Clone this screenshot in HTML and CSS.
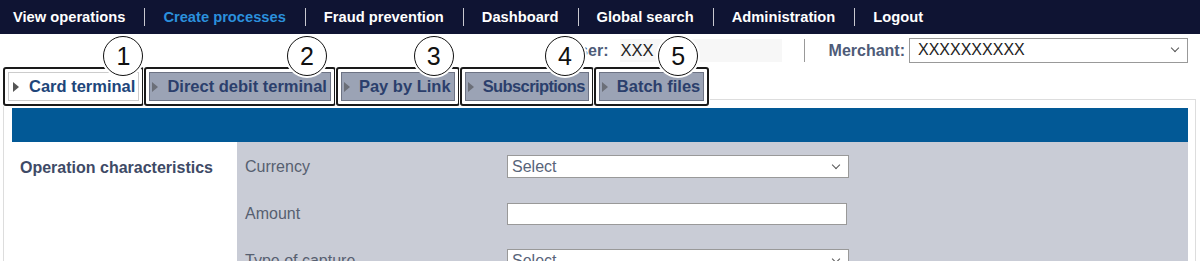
FILE: index.html
```html
<!DOCTYPE html>
<html lang="en">
<head>
  <meta charset="UTF-8" />
  <title>Create processes</title>
  <link rel="stylesheet" href="styles.css">
</head>
<body>
  <!-- Main menu -->
  <nav class="menu">
    <a href="#">View operations</a>
    <a href="#" class="active">Create processes</a>
    <a href="#">Fraud prevention</a>
    <a href="#">Dashboard</a>
    <a href="#">Global search</a>
    <a href="#">Administration</a>
    <a href="#">Logout</a>
  </nav>

  <!-- User / merchant bar -->
  <div class="userbar">
    <div class="user">
      <span class="label">User:</span>
      <span class="user-name">XXX</span>
    </div>
    <div class="merchant">
      <span class="label">Merchant:</span>
      <div class="select merchant-select">XXXXXXXXXX</div>
    </div>
  </div>

  <!-- Tabs, each one marked with a numbered callout -->
  <div class="tabs">
    <div class="mark">
      <span class="tab current">Card terminal</span>
      <span class="callout">1</span>
    </div>
    <div class="mark">
      <span class="tab">Direct debit terminal</span>
      <span class="callout c2">2</span>
    </div>
    <div class="mark">
      <span class="tab">Pay by Link</span>
      <span class="callout c3">3</span>
    </div>
    <div class="mark">
      <span class="tab tight">Subscriptions</span>
      <span class="callout c4">4</span>
    </div>
    <div class="mark">
      <span class="tab">Batch files</span>
      <span class="callout c5">5</span>
    </div>
  </div>

  <div class="panel">
    <div class="panel-head"></div>
    <div class="section">
      <div class="section-title">Operation characteristics</div>
      <div class="fields">
        <div class="row">
          <label>Currency</label>
          <div class="select">Select</div>
        </div>
        <div class="row">
          <label>Amount</label>
          <div class="input"></div>
        </div>
        <div class="row">
          <label>Type of capture</label>
          <div class="select">Select</div>
        </div>
      </div>
    </div>
  </div>
</body>
</html>
```

FILE: styles.css
```css
/* Base styling */
body {
  font-family: "Liberation Sans", Arial, sans-serif;
  background: #fff;
  color: #333;
  margin: 0;
  padding: 0;
  overflow: hidden;
}
/* Main menu */
.menu {
  display: flex;
  align-items: center;
  height: 34px;
  background-color: #0f1433;
}
.menu a {
  color: #fff;
  font-weight: bold;
  font-size: 14.7px;
  text-decoration: none;
  padding: 0 19px 0 13px;
  border-right: 1px solid #c8c8d0;
  line-height: 18px;
}
.menu a + a {
  padding-left: 18px;
}
.menu a:last-child {
  border-right: none;
}
.menu a.active {
  color: #2b90dd;
}
/* User / merchant bar */
.userbar {
  display: flex;
  justify-content: flex-end;
  align-items: center;
  height: 33px;
  padding-right: 12px;
}
.label {
  font-weight: bold;
  font-size: 16px;
  color: #4e5b78;
}
.user {
  display: flex;
  align-items: center;
  width: 214px;
  padding-right: 22px;
  border-right: 1px solid #999;
  height: 23px;
}
.user-name {
  font-size: 16.5px;
  color: #222;
  margin-left: 12px;
  background: #f7f7f7;
  flex: 1;
  padding: 2px 0;
}
.merchant {
  display: flex;
  align-items: center;
  margin-left: 24px;
}
.merchant .label {
  margin-right: 4px;
}
.select {
  position: relative;
  box-sizing: border-box;
  border: 1px solid #999;
  background: #fff;
  font-size: 16px;
  color: #222;
  padding: 2px 4px;
  height: 23px;
  line-height: 17px;
}
.select::after {
  content: "";
  position: absolute;
  right: 9px;
  top: 6px;
  width: 5px;
  height: 5px;
  border-right: 1px solid #555;
  border-bottom: 1px solid #555;
  transform: rotate(45deg);
}
.merchant-select {
  width: 279px;
  height: 25px;
  padding-left: 8px;
}
/* Tabs */
.tabs {
  display: flex;
  padding-left: 3px;
  height: 38px;
  position: relative;
  z-index: 2;
}
.mark {
  position: relative;
  border: 2px solid #1a1a1a;
  border-radius: 3px;
  box-shadow: 0 0 0 1px #fff;
  padding: 3px;
  height: 29px;
  background: #fff;
}
.tab {
  display: flex;
  align-items: center;
  height: 27px;
  padding: 0 3px 0 2px;
  font-size: 16.5px;
  font-weight: bold;
  color: #2b3f6c;
  background: #9ba3b5;
  border: 1px solid #6d7384;
}
.tab::before {
  content: "";
  border-left: 6px solid #6b6f78;
  border-top: 5px solid transparent;
  border-bottom: 5px solid transparent;
  margin-right: 9px;
}
.tab.tight {
  letter-spacing: -0.6px;
}
.tab.current {
  background: #fff;
  border-color: #ccc;
  color: #20457a;
  padding-left: 4px;
}
.tab.current::before {
  border-left-color: #555;
  margin-right: 10px;
}
/* Numbered callouts over the tabs */
.callout {
  position: absolute;
  top: -33px;
  right: -1px;
  width: 38px;
  height: 38px;
  border: 1.5px solid #111;
  border-radius: 50%;
  background: #fff;
  box-shadow: 0 0 0 2px #fff;
  font-size: 25px;
  color: #111;
  display: flex;
  justify-content: center;
  align-items: center;
}
.callout.c2 { right: 7px; }
.callout.c3 { right: 4px; }
.callout.c4 { right: 7px; }
.callout.c5 { right: 9px; }
/* Form panel */
.panel {
  margin: -6px 4px 0 3px;
  border: 1px solid #ddd;
  padding: 8px 7px 0 8px;
  height: 200px;
  position: relative;
  z-index: 1;
}
.panel-head {
  height: 34px;
  background: #025996;
}
.section {
  display: flex;
}
.section-title {
  width: 217px;
  padding: 17px 0 0 8px;
  font-size: 16px;
  font-weight: bold;
  color: #3e4a66;
}
.fields {
  flex: 1;
  background: #c9ccd6;
  padding-top: 13px;
}
.row {
  display: flex;
  align-items: center;
  height: 23px;
  margin-bottom: 24px;
}
.row label {
  width: 262px;
  padding-left: 8px;
  font-size: 16px;
  color: #575f70;
}
.row .select {
  width: 342px;
  color: #58647a;
}
.input {
  box-sizing: border-box;
  width: 340px;
  height: 22px;
  border: 1px solid #999;
  background: #fff;
}
```
